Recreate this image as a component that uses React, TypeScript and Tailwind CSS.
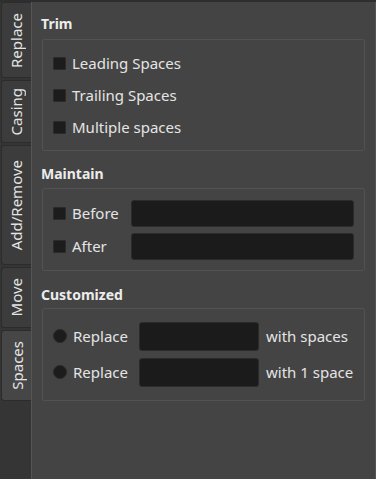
import { FC, ReactNode } from 'react';

interface TabProps {
  label: string;
  height: string;
  active?: boolean;
}

const Tab: FC<TabProps> = ({ label, height, active }) => (
  <div
    className={`${height} ml-px flex items-center justify-center rounded-l-[3px] border border-r-0 border-[#2c2c2c] ${
      active ? 'bg-[#464646] -mr-px w-[31px]' : 'bg-[#3c3c3c] w-[30px]'
    }`}>
    <span className="[writing-mode:vertical-rl] rotate-180 text-[15px] leading-none text-[#e4e4e4]">
      {label}
    </span>
  </div>
);

const Check = () => (
  <span className="w-[13px] h-[13px] shrink-0 bg-[#1c1c1c] border border-[#2a2a2a] rounded-[1px]" />
);

const Radio = () => (
  <span className="w-[14px] h-[14px] shrink-0 bg-[#1c1c1c] border border-[#2a2a2a] rounded-full" />
);

const Field = ({ className }: { className: string }) => (
  <div className={`${className} bg-[#1b1b1b] border border-[#2b2b2b] rounded-[3px]`} />
);

const Group = ({ title, className, children }: { title: string; className: string; children: ReactNode }) => (
  <div className={className}>
    <div className="-ml-px text-[14px] leading-[20px] font-bold text-[#ececec]">{title}</div>
    {children}
  </div>
);

const App = () => {
  return (
    <div className="w-[376px] h-[479px] flex bg-[#444444] border-t-2 border-[#2e2e2e] font-['Noto_Sans',sans-serif] overflow-hidden">
      <div className="w-[31px] shrink-0 flex flex-col gap-[2px] bg-[#353535]">
        <Tab label="Replace" height="h-[76px]" />
        <Tab label="Casing" height="h-[63px]" />
        <Tab label="Add/Remove" height="h-[120px]" />
        <Tab label="Move" height="h-[61px]" />
        <Tab label="Spaces" height="h-[71px]" active />
      </div>
      <div className="flex-1 border-l border-r border-[#555555] pl-[10px] pr-[10px] pt-[12px] text-[15px] text-[#e4e4e4]">
        <Group title="Trim" className="">
          <div className="mt-[5px] border border-[#525252] rounded-[2px] pl-[10px] pt-[7px] pb-[7px]">
            {['Leading Spaces', 'Trailing Spaces', 'Multiple spaces'].map((t) => (
              <div key={t} className="h-[32px] flex items-center gap-[6px]">
                <Check />
                <span>{t}</span>
              </div>
            ))}
          </div>
        </Group>
        <Group title="Maintain" className="mt-[13px]">
          <div className="mt-[4px] border border-[#525252] rounded-[2px] pl-[10px] pr-[10px] pt-[8px] pb-[7px]">
            {['Before', 'After'].map((t) => (
              <div key={t} className="h-[33px] flex items-center">
                <div className="w-[78px] flex items-center gap-[6px]">
                  <Check />
                  <span>{t}</span>
                </div>
                <Field className="flex-1 h-[27px]" />
              </div>
            ))}
          </div>
        </Group>
        <Group title="Customized" className="mt-[14px]">
          <div className="mt-[3px] border border-[#525252] rounded-[2px] pl-[10px] pt-[9px] pb-[10px]">
            {['with spaces', 'with 1 space'].map((t) => (
              <div key={t} className="h-[36px] flex items-center">
                <div className="w-[86px] flex items-center gap-[6px]">
                  <Radio />
                  <span>Replace</span>
                </div>
                <Field className="w-[120px] h-[29px]" />
                <span className="ml-[7px]">{t}</span>
              </div>
            ))}
          </div>
        </Group>
      </div>
    </div>
  );
};

export default App;
